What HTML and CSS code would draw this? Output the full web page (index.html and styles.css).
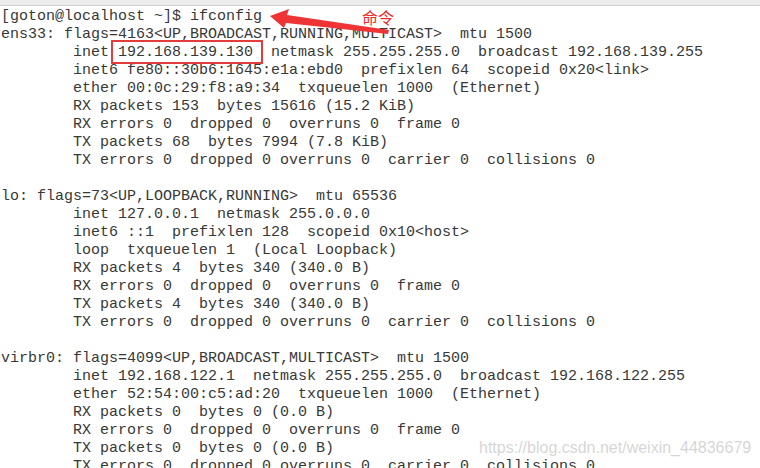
FILE: index.html
```html
<!DOCTYPE html>
<html lang="zh">
<head>
    <meta charset="UTF-8">
    <meta name="viewport" content="width=device-width, initial-scale=1.0">
    <title>ifconfig</title>
    <link rel="stylesheet" href="styles.css">
</head>
<body>

    <div class="screen">
        <!-- top edge of the terminal window -->
        <div class="topbar"></div>

        <pre class="terminal">[goton@localhost ~]$ ifconfig
ens33: flags=4163&lt;UP,BROADCAST,RUNNING,MULTICAST&gt;  mtu 1500
        inet 192.168.139.130  netmask 255.255.255.0  broadcast 192.168.139.255
        inet6 fe80::30b6:1645:e1a:ebd0  prefixlen 64  scopeid 0x20&lt;link&gt;
        ether 00:0c:29:f8:a9:34  txqueuelen 1000  (Ethernet)
        RX packets 153  bytes 15616 (15.2 KiB)
        RX errors 0  dropped 0  overruns 0  frame 0
        TX packets 68  bytes 7994 (7.8 KiB)
        TX errors 0  dropped 0 overruns 0  carrier 0  collisions 0

lo: flags=73&lt;UP,LOOPBACK,RUNNING&gt;  mtu 65536
        inet 127.0.0.1  netmask 255.0.0.0
        inet6 ::1  prefixlen 128  scopeid 0x10&lt;host&gt;
        loop  txqueuelen 1  (Local Loopback)
        RX packets 4  bytes 340 (340.0 B)
        RX errors 0  dropped 0  overruns 0  frame 0
        TX packets 4  bytes 340 (340.0 B)
        TX errors 0  dropped 0 overruns 0  carrier 0  collisions 0

virbr0: flags=4099&lt;UP,BROADCAST,MULTICAST&gt;  mtu 1500
        inet 192.168.122.1  netmask 255.255.255.0  broadcast 192.168.122.255
        ether 52:54:00:c5:ad:20  txqueuelen 1000  (Ethernet)
        RX packets 0  bytes 0 (0.0 B)
        RX errors 0  dropped 0  overruns 0  frame 0
        TX packets 0  bytes 0 (0.0 B)
        TX errors 0  dropped 0 overruns 0  carrier 0  collisions 0</pre>

        <!-- annotations drawn over the screenshot -->
        <div class="mark-box"></div>
        <svg class="mark-arrow" width="130" height="40" viewBox="260 0 130 40">
            <polygon points="270,16 289,9 287,15 389,30 388,34 286,23 284,28" fill="#ee3434"/>
        </svg>
        <div class="mark-label">命令</div>

        <div class="watermark">https://blog.csdn.net/weixin_44836679</div>
    </div>

</body>
</html>
```

FILE: styles.css
```css
body {
    margin: 0;
    background-color: #fff;
    overflow: hidden;
}
.screen {
    position: relative;
    width: 760px;
    height: 468px;
    overflow: hidden;
}
.topbar {
    height: 5px;
    background-color: #ececec;
    border-bottom: 1px solid #d0d0d0;
}
.terminal {
    margin: 2px 0 0 0;
    padding-left: 1px;
    font-family: "Liberation Mono", monospace;
    font-size: 15px;
    line-height: 18px;
    color: #383838;
}
.mark-box {
    position: absolute;
    left: 111px;
    top: 40px;
    width: 148px;
    height: 20px;
    border: 2px solid #e43b3b;
}
.mark-arrow {
    position: absolute;
    left: 260px;
    top: 0;
}
.mark-label {
    position: absolute;
    left: 362px;
    top: 7px;
    font-family: "Noto Sans CJK SC", sans-serif;
    font-size: 16px;
    line-height: 20px;
    color: #f02a2a;
}
.watermark {
    position: absolute;
    left: 479px;
    top: 438px;
    font-family: "Liberation Sans", Arial, sans-serif;
    font-size: 16px;
    line-height: 20px;
    color: rgba(200, 200, 200, 0.75);
}
```
